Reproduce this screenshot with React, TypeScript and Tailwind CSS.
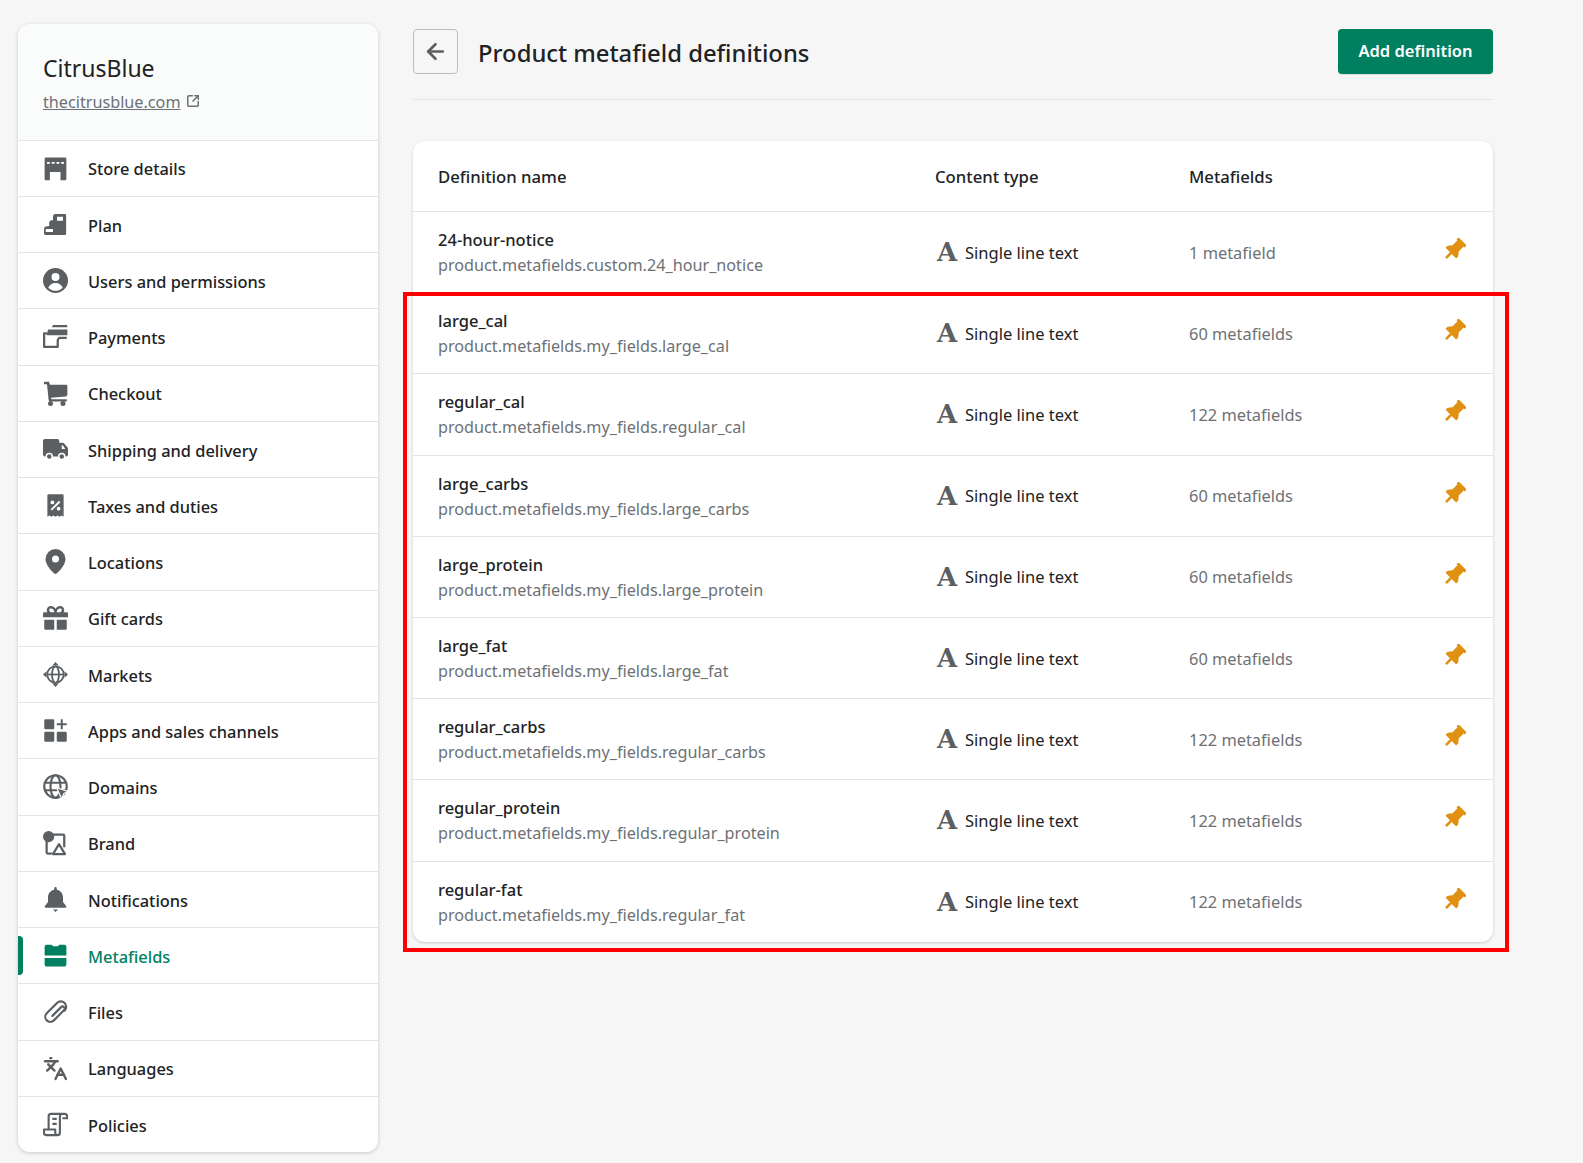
import React from 'react';
import { ArrowLeft, Languages, SquareArrowOutUpRight } from 'lucide-react';

type IconProps = { className?: string };

const Svg = ({ className, children }: IconProps & { children: React.ReactNode }) => (
  <svg viewBox="0 0 20 20" fill="currentColor" className={className}>
    {children}
  </svg>
);

const StoreIcon = (p: IconProps) => (
  <Svg {...p}>
    <path d="M2.300 1.200h15.400a1 1 0 0 1 1 1v16.100a1 1 0 0 1-1 1H14v-6.600H5.500v6.600H2.300a1 1 0 0 1-1-1V2.200a1 1 0 0 1 1-1z" />
    <path d="M3.200 4.800h2.300v1.300H3.200zM7 4.800h2.300v1.300H7zM10.800 4.800h2.300v1.300h-2.300zM14.500 4.800h2.300v1.300h-2.300z" fill="#fff" />
  </Svg>
);
const PlanIcon = (p: IconProps) => (
  <Svg {...p}>
    <path
      fillRule="evenodd"
      d="M10 1.600h7.500a1 1 0 0 1 1 1v14.800a1 1 0 0 1-1 1H2.300a1.500 1.500 0 0 1-1.500-1.500v-3.400a2 2 0 0 1 1.500-1.900l2.700-.5V8.500a2 2 0 0 1 2-2h1V3.600a2 2 0 0 1 2-2zm1.200 2.100V7H16V3.700zM2.200 13.500V16H8v-2.500z"
    />
  </Svg>
);
const UserIcon = (p: IconProps) => (
  <Svg {...p}>
    <path
      fillRule="evenodd"
      d="M10 0a10 10 0 1 1 0 20 10 10 0 0 1 0-20zm0 4a3.200 3.200 0 1 0 0 6.400A3.200 3.200 0 0 0 10 4zm-5.800 11.800a8 8 0 0 0 11.600 0c-1-2.200-3.200-3.800-5.800-3.800s-4.800 1.600-5.800 3.800z"
    />
  </Svg>
);
const PaymentIcon = (p: IconProps) => (
  <Svg {...p}>
    <path d="M8 .8h10.500a1 1 0 0 1 1 1v.8H7zM4 4.300h15.500V9H3z" />
    <path d="M3.500 7.500H.9v10.800h10.900v-5.500l1.200-1.800h6" fill="none" stroke="currentColor" strokeWidth="1.800" strokeLinejoin="round" />
  </Svg>
);
const CartIcon = (p: IconProps) => (
  <Svg {...p}>
    <path d="M.8.500h3.300a1 1 0 0 1 1 .8L5.400 3H18.500a1 1 0 0 1 1 1v6.800a1.500 1.500 0 0 1-1.300 1.500L6.500 13.300l.2 1.300H19v1.700H5.500a1 1 0 0 1-1-.9L3.200 2.500H.8z" />
    <circle cx="6" cy="18" r="2" />
    <circle cx="16" cy="18" r="2" />
  </Svg>
);
const TruckIcon = (p: IconProps) => (
  <Svg {...p}>
    <path
      fillRule="evenodd"
      d="M1.500 1.500h10a1.500 1.500 0 0 1 1.500 1.500v1.500h2.800c.4 0 .8.200 1 .5l2.900 3.400c.2.300.3.600.3.900V14a1.500 1.500 0 0 1-1.500 1.500H1.500A1.500 1.500 0 0 1 0 14V3a1.500 1.500 0 0 1 1.500-1.500zM15 6.500v3h2.800L15.800 6.500z"
    />
    <circle cx="5" cy="15.500" r="2.400" stroke="#fff" strokeWidth="1.200" />
    <circle cx="15" cy="15.500" r="2.400" stroke="#fff" strokeWidth="1.200" />
  </Svg>
);
const TaxIcon = (p: IconProps) => (
  <Svg {...p}>
    <path d="M4.500 1h11a1 1 0 0 1 1 1v17l-1.600-1-1.600 1-1.700-1-1.600 1-1.700-1-1.600 1-1.600-1-1.600 1V2a1 1 0 0 1 1-1z" />
    <path d="M12.800 6.200l1.100 1.100-6.700 6.700-1.100-1.100z" fill="#fff" />
    <circle cx="7.500" cy="7.500" r="1.500" fill="#fff" />
    <circle cx="12.500" cy="12.500" r="1.500" fill="#fff" />
  </Svg>
);
const PinMapIcon = (p: IconProps) => (
  <Svg {...p}>
    <path
      fillRule="evenodd"
      d="M10 0a8 8 0 0 0-8 8c0 5 5.300 10 7 11.600.6.500 1.400.5 2 0C12.700 18 18 13 18 8a8 8 0 0 0-8-8zm0 5.200a2.800 2.800 0 1 1 0 5.600 2.800 2.800 0 0 1 0-5.600z"
    />
  </Svg>
);
const GiftIcon = (p: IconProps) => (
  <Svg {...p}>
    <path
      fillRule="evenodd"
      d="M6.300 0c1.600 0 3 .9 3.700 2.200C10.700.9 12.100 0 13.700 0c2 0 3.300 1.500 3.300 3.100 0 .7-.2 1.300-.5 1.900H19a1 1 0 0 1 1 1v3H0V6a1 1 0 0 1 1-1h2.500A3.400 3.400 0 0 1 3 3.100C3 1.500 4.300 0 6.300 0zm0 2C5.500 2 5 2.500 5 3.100 5 4 5.700 5 7 5h2c0-1.800-1.300-3-2.700-3zm7.400 0C12.300 2 11 3.200 11 5h2c1.300 0 2-1 2-1.900 0-.6-.5-1.100-1.300-1.100z"
    />
    <path d="M1 11h8v8H2a1 1 0 0 1-1-1zM11 11h8v7a1 1 0 0 1-1 1h-7z" />
  </Svg>
);
const MarketIcon = (p: IconProps) => (
  <Svg {...p}>
    <g fill="none" stroke="currentColor" strokeWidth="1.400">
      <circle cx="10" cy="10" r="6.600" />
      <ellipse cx="10" cy="10" rx="2.800" ry="6.600" />
      <path d="M3.400 10h13.200" />
    </g>
    <path d="M10 0l2.600 2.800H7.400zM10 20l-2.600-2.800h5.200zM0 10l2.800-2.600v5.200zM20 10l-2.800 2.600V7.400z" />
  </Svg>
);
const AppsIcon = (p: IconProps) => (
  <Svg {...p}>
    <rect x="1" y="1" width="8" height="8" rx="1" />
    <rect x="1" y="11" width="8" height="8" rx="1" />
    <rect x="11" y="11" width="8" height="8" rx="1" />
    <path d="M14.200 1h1.600v3.200H19v1.600h-3.200V9h-1.600V5.800H11V4.200h3.200z" />
  </Svg>
);
const DomainIcon = (p: IconProps) => (
  <Svg {...p}>
    <g fill="none" stroke="currentColor" strokeWidth="1.700">
      <circle cx="10" cy="10" r="9" />
      <ellipse cx="10" cy="10" rx="4" ry="9" />
      <path d="M1 7h18M1 13h18" />
    </g>
    <path d="M11 11l9 3-3.400 1.700-1.700 4.300z" stroke="#fff" strokeWidth="1" />
  </Svg>
);
const BrandIcon = (p: IconProps) => (
  <Svg {...p}>
    <path d="M5 2.900h11a1 1 0 0 1 1 1V13M2.900 8v9a1 1 0 0 0 1 1h4" fill="none" stroke="currentColor" strokeWidth="1.800" />
    <circle cx="4.500" cy="4.500" r="4.500" />
    <path d="M12.800 8.500L19 19.200H6.500z" fill="#fff" />
    <path d="M12.800 10.500l4.800 8H8z" fill="none" stroke="currentColor" strokeWidth="1.800" strokeLinejoin="round" />
  </Svg>
);
const BellIcon = (p: IconProps) => (
  <Svg {...p}>
    <path d="M10 0a1 1 0 0 1 1 1v1.100c3 .5 5 3 5 6V12l2.500 3.200c.4.600 0 1.300-.7 1.300H2.200c-.7 0-1.100-.7-.7-1.300L4 12V8.100c0-3 2-5.500 5-6V1a1 1 0 0 1 1-1z" />
    <path d="M8 18h4l-2 2z" />
  </Svg>
);
const MetafieldIcon = (p: IconProps) => (
  <Svg {...p}>
    <path d="M2.800 1.300H7l1 1.300h4l1-1.300h4.200a1.500 1.500 0 0 1 1.500 1.500v7.100H1.300V2.800a1.500 1.500 0 0 1 1.500-1.500zM1.300 12h17.400v5.200a1.500 1.500 0 0 1-1.500 1.500H2.800a1.500 1.500 0 0 1-1.500-1.500z" />
  </Svg>
);
const ClipIcon = (p: IconProps) => (
  <Svg {...p}>
    <path
      d="M7.500 13.500l7-7a1.700 1.700 0 0 1 2.400 2.400l-8.200 8.200a4 4 0 0 1-5.700-5.700l8.200-8.200a4.300 4.300 0 0 1 6.100 6.100"
      fill="none"
      stroke="currentColor"
      strokeWidth="1.700"
      strokeLinecap="round"
    />
  </Svg>
);
const PolicyIcon = (p: IconProps) => (
  <Svg {...p}>
    <path
      d="M4.500 14V3.500a2 2 0 0 1 2-2h11a2 2 0 0 1 1.800 2V5h-3.800M15.500 1.500a2 2 0 0 0-2 2v13a2 2 0 0 1-2 2H2.800a2 2 0 0 1-2-2V14h9v2.500a2 2 0 0 0 1.700 2"
      fill="none"
      stroke="currentColor"
      strokeWidth="1.700"
      strokeLinejoin="round"
    />
    <path d="M7.500 5.500h3.500M7.500 9.500h3.500" stroke="currentColor" strokeWidth="1.700" />
  </Svg>
);
const LangIcon = ({ className }: IconProps) => <Languages className={className} strokeWidth={2.3} />;
const PinIcon = (p: IconProps) => (
  <Svg {...p}>
    <g transform="rotate(45 10 10)">
      <path d="M5 0h10v2.500h-1.200v6L16.500 12v2.500h-13V12l2.700-3.500v-6H5z" />
      <rect x="8.900" y="14" width="2.200" height="6.500" />
    </g>
  </Svg>
);

const navItems = [
  { text: 'Store details', icon: StoreIcon },
  { text: 'Plan', icon: PlanIcon },
  { text: 'Users and permissions', icon: UserIcon },
  { text: 'Payments', icon: PaymentIcon },
  { text: 'Checkout', icon: CartIcon },
  { text: 'Shipping and delivery', icon: TruckIcon },
  { text: 'Taxes and duties', icon: TaxIcon },
  { text: 'Locations', icon: PinMapIcon },
  { text: 'Gift cards', icon: GiftIcon },
  { text: 'Markets', icon: MarketIcon },
  { text: 'Apps and sales channels', icon: AppsIcon },
  { text: 'Domains', icon: DomainIcon },
  { text: 'Brand', icon: BrandIcon },
  { text: 'Notifications', icon: BellIcon },
  { text: 'Metafields', icon: MetafieldIcon, active: true },
  { text: 'Files', icon: ClipIcon },
  { text: 'Languages', icon: LangIcon },
  { text: 'Policies', icon: PolicyIcon },
];

const rows = [
  { name: '24-hour-notice', key: 'product.metafields.custom.24_hour_notice', count: '1 metafield' },
  { name: 'large_cal', key: 'product.metafields.my_fields.large_cal', count: '60 metafields' },
  { name: 'regular_cal', key: 'product.metafields.my_fields.regular_cal', count: '122 metafields' },
  { name: 'large_carbs', key: 'product.metafields.my_fields.large_carbs', count: '60 metafields' },
  { name: 'large_protein', key: 'product.metafields.my_fields.large_protein', count: '60 metafields' },
  { name: 'large_fat', key: 'product.metafields.my_fields.large_fat', count: '60 metafields' },
  { name: 'regular_carbs', key: 'product.metafields.my_fields.regular_carbs', count: '122 metafields' },
  { name: 'regular_protein', key: 'product.metafields.my_fields.regular_protein', count: '122 metafields' },
  { name: 'regular-fat', key: 'product.metafields.my_fields.regular_fat', count: '122 metafields' },
];

const Sidebar = () => (
  <aside className="flex h-[1128px] w-[360px] shrink-0 flex-col overflow-hidden rounded-xl bg-white shadow-[0_1px_4px_rgba(0,0,0,0.18)]">
    <div className="h-[115.5px] shrink-0 bg-[#fafbfb] pl-[25px] pt-[26px]">
      <div className="text-[23px] leading-[37px] text-[#202223]">CitrusBlue</div>
      <div className="mt-[3px] flex items-center gap-[5px] text-[#6d7175]">
        <span className="text-[16.2px] leading-[25px] underline">thecitrusblue.com</span>
        <SquareArrowOutUpRight className="mb-1 h-[14px] w-[14px]" strokeWidth={2.6} />
      </div>
    </div>
    {navItems.map((item) => (
      <div
        key={item.text}
        className="relative flex h-[56.25px] shrink-0 items-center border-t border-[#e1e3e5] pl-[25px]"
      >
        {item.active && <div className="absolute bottom-2 left-0 top-2 w-[5px] rounded-r bg-[#008060]" />}
        <item.icon
          className={`h-[25px] w-[25px] shrink-0 ${item.active ? 'text-[#008060]' : 'text-[#5c5f62]'}`}
        />
        <span
          className={`ml-[20px] pt-[3px] text-[16.4px] font-medium ${item.active ? 'text-[#008060]' : 'text-[#202223]'}`}
        >
          {item.text}
        </span>
      </div>
    ))}
  </aside>
);

export default function App() {
  return (
    <div className="flex h-[1163px] gap-[35px] overflow-hidden bg-[#f6f6f7] pl-[18px] pt-6 font-['Noto_Sans',sans-serif]">
      <Sidebar />
      <main className="w-[1080px] shrink-0 pt-[5px]">
        <div className="flex h-[71px] items-start border-b border-[#e1e3e5]">
          <button className="flex h-[45px] w-[45px] items-center justify-center rounded border border-[#babfc3] text-[#5c5f62]">
            <ArrowLeft className="h-[25px] w-[25px]" strokeWidth={2.5} />
          </button>
          <h1 className="ml-5 text-[23.8px] font-medium leading-[48px] text-[#202223]">Product metafield definitions</h1>
          <button className="ml-auto h-[45px] w-[155px] rounded bg-[#008060] text-[16.5px] font-semibold text-white shadow-[0_1px_0_rgba(0,0,0,0.1)]">
            Add definition
          </button>
        </div>

        <div className="relative mt-[41px] rounded-xl bg-white shadow-[0_1px_3px_rgba(0,0,0,0.18)]">
          <div className="grid h-[70px] grid-cols-[497px_254px_1fr] items-center px-[25px] pt-[2px] text-[16.7px] font-medium text-[#202223]">
            <div>Definition name</div>
            <div>Content type</div>
            <div>Metafields</div>
          </div>
          {rows.map((row) => (
            <div
              key={row.key}
              className="grid h-[81.2px] grid-cols-[497px_254px_1fr_auto] items-center border-t border-[#e1e3e5] pl-[25px] pr-[27px] leading-[25px]"
            >
              <div className="pt-[2px]">
                <div className="-mt-[1px] text-[16.5px] font-medium text-[#202223]">{row.name}</div>
                <div className="mt-[1px] text-[16.2px] text-[#6d7175]">{row.key}</div>
              </div>
              <div className="flex items-center text-[16.5px] text-[#202223]">
                <span className="w-[30px] pl-[2px] pt-[1px] font-['DejaVu_Serif',serif] text-[26px] font-bold text-[#5c5f62]">A</span>
                Single line text
              </div>
              <div className="text-[16.4px] text-[#6d7175]">{row.count}</div>
              <PinIcon className="mb-[5px] h-[23px] w-[23px] text-[#e09112]" />
            </div>
          ))}
          <div className="pointer-events-none absolute -bottom-[10px] -left-[10px] -right-[16px] top-[151px] border-[4px] border-[#ff0000]" />
        </div>
      </main>
    </div>
  );
}
